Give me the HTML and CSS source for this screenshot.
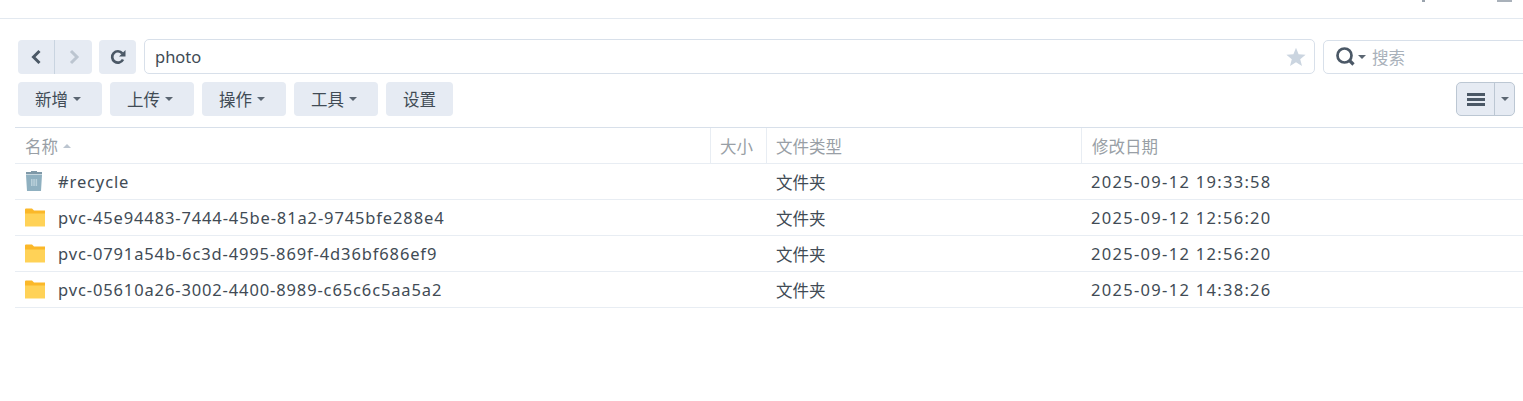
FILE: index.html
```html
<!DOCTYPE html>
<html lang="zh-CN">
<head>
<meta charset="utf-8">
<title>File Station</title>
<link rel="stylesheet" href="styles.css">
</head>
<body>
<header class="titlebar">
  <span class="tb-dot"></span>
  <span class="tb-bar"></span>
</header>
<main class="content">
  <div class="row-path">
    <div class="btn-group">
      <button class="nav nav-back"><svg width="12" height="16" viewBox="0 0 12 16"><path d="M9.500 2 3.500 8l6 6" fill="none" stroke="#4b5866" stroke-width="3"/></svg></button>
      <button class="nav nav-fwd"><svg width="12" height="16" viewBox="0 0 12 16"><path d="M3 2l6 6-6 6" fill="none" stroke="#bcc5d0" stroke-width="3"/></svg></button>
    </div>
    <button class="refresh"><svg width="16" height="16" viewBox="0 0 16 16"><path d="M13 10.500A5.700 5.700 0 1 1 12.300 4.300" fill="none" stroke="#4b5866" stroke-width="2.700"/><path d="M15.500 1v6.600H9z" fill="#4b5866"/></svg></button>
    <div class="path-box">
      <span class="path-text">photo</span>
      <svg class="star" width="20" height="20" viewBox="0 0 20 20"><path d="M10 .8l2.600 6.500 7 .4-5.400 4.500 1.800 6.800L10 15.200 4 19l1.800-6.800L.4 7.700l7-.4z" fill="#cbd5e0"/></svg>
    </div>
    <div class="search-box">
      <svg class="search-icon" width="20" height="20" viewBox="0 0 20 20"><circle cx="8.500" cy="8.500" r="7" fill="none" stroke="#4b5866" stroke-width="2.700"/><path d="M13.500 13.500l4 4" stroke="#4b5866" stroke-width="3.200"/></svg>
      <span class="caret caret-search"></span>
      <span class="search-text">搜索</span>
    </div>
  </div>
  <div class="row-actions">
    <button class="act">新增<span class="caret"></span></button>
    <button class="act">上传<span class="caret"></span></button>
    <button class="act">操作<span class="caret"></span></button>
    <button class="act">工具<span class="caret"></span></button>
    <button class="act act-plain">设置</button>
    <div class="view-toggle">
      <span class="view-list"><svg width="18" height="13" viewBox="0 0 18 13"><path d="M0 1.500h18M0 6.500h18M0 11.500h18" stroke="#4b5866" stroke-width="2.800"/></svg></span>
      <span class="view-more"><span class="caret"></span></span>
    </div>
  </div>
  <div class="table">
    <div class="tr th">
      <div class="c-name">名称<span class="sort"></span></div>
      <div class="c-size">大小</div>
      <div class="c-type">文件类型</div>
      <div class="c-date">修改日期</div>
    </div>
    <div class="tr">
      <div class="c-name"><svg class="ico" width="22" height="22" viewBox="1 1 22 22"><path d="M8 1h6v1h5v2H3V2h5z" fill="#7f99a8"/><path d="M3 4.500h16L18 21H4z" fill="#8fb0c0"/><path d="M8 9h1.500v7H8zM10.300 9h1.500v7h-1.500zM12.600 9h1.500v7h-1.500z" fill="#b9d0da"/></svg><span class="fname">#recycle</span></div>
      <div class="c-size"></div>
      <div class="c-type">文件夹</div>
      <div class="c-date">2025-09-12 19:33:58</div>
    </div>
    <div class="tr">
      <div class="c-name"><svg class="ico" width="22" height="20" viewBox="0 0 22 20"><path d="M1 1.500a1 1 0 0 1 1-1h6l2 2h11v4H1z" fill="#fbb829"/><path d="M1 5.500h20v13H1z" fill="#ffd257"/></svg><span class="fname">pvc-45e94483-7444-45be-81a2-9745bfe288e4</span></div>
      <div class="c-size"></div>
      <div class="c-type">文件夹</div>
      <div class="c-date">2025-09-12 12:56:20</div>
    </div>
    <div class="tr">
      <div class="c-name"><svg class="ico" width="22" height="20" viewBox="0 0 22 20"><path d="M1 1.500a1 1 0 0 1 1-1h6l2 2h11v4H1z" fill="#fbb829"/><path d="M1 5.500h20v13H1z" fill="#ffd257"/></svg><span class="fname">pvc-0791a54b-6c3d-4995-869f-4d36bf686ef9</span></div>
      <div class="c-size"></div>
      <div class="c-type">文件夹</div>
      <div class="c-date">2025-09-12 12:56:20</div>
    </div>
    <div class="tr">
      <div class="c-name"><svg class="ico" width="22" height="20" viewBox="0 0 22 20"><path d="M1 1.500a1 1 0 0 1 1-1h6l2 2h11v4H1z" fill="#fbb829"/><path d="M1 5.500h20v13H1z" fill="#ffd257"/></svg><span class="fname">pvc-05610a26-3002-4400-8989-c65c6c5aa5a2</span></div>
      <div class="c-size"></div>
      <div class="c-type">文件夹</div>
      <div class="c-date">2025-09-12 14:38:26</div>
    </div>
  </div>
</main>
</body>
</html>
```
FILE: styles.css
```css
* { box-sizing: border-box; }
html, body { margin: 0; padding: 0; height: 100%; overflow: hidden; background: #fff; }
body {
  font-family: "Noto Sans", "Noto Sans CJK SC", sans-serif;
  font-size: 16.5px;
  color: #414b55;
  width: 1523px;
}
button { font: inherit; color: inherit; border: 0; padding: 0; margin: 0; }

.titlebar {
  height: 19px;
  border-bottom: 1px solid #e3e9f0;
  display: flex;
  align-items: flex-start;
  padding-left: 1422px;
}
.tb-dot { width: 3px; height: 2px; background: #9aa3ad; }
.tb-bar { width: 15px; height: 2px; margin-left: 72px; background: #a9b1ba; }

.content { padding: 21px 0 0 15px; }

.row-path { display: flex; height: 34px; padding-left: 3px; }
.btn-group { display: flex; flex: none; width: 74px; height: 34px; background: #e6ebf3; border-radius: 4px; }
.nav { background: transparent; width: 37px; height: 34px; display: flex; align-items: center; justify-content: center; }
.nav-back { border-right: 1px solid #c9d4e0; }
.refresh { flex: none; width: 37px; height: 34px; margin-left: 7px; background: #e6ebf3; border-radius: 4px; display: flex; align-items: center; justify-content: center; }
.path-box {
  flex: none; width: 1171px; height: 35px; margin: -1px 0 0 8px;
  border: 1px solid #d8e0ea; border-radius: 5px;
  display: flex; align-items: center; justify-content: space-between;
  padding: 0 8px 0 10px;
}
.path-text { color: #414b55; }
.search-box {
  flex: none; width: 260px; height: 34px; margin-left: 8px;
  border: 1px solid #d8e0ea; border-radius: 5px;
  display: flex; align-items: center; padding-left: 12px;
}
.search-text { color: #a9b1ba; margin-left: 6px; }

.caret {
  display: inline-block; width: 0; height: 0;
  border-left: 4px solid transparent; border-right: 4px solid transparent;
  border-top: 4px solid #5b6672;
  margin-left: 5px;
}
.caret-search { margin-left: 2px; }

.row-actions { display: flex; gap: 8px; height: 34px; margin-top: 8px; padding-left: 3px; }
.act { width: 84px; height: 34px; padding-right: 4px; background: #e6ebf3; border-radius: 4px; display: flex; align-items: center; justify-content: center; }
.act-plain { width: 67px; padding-right: 0; }
.view-toggle {
  display: flex; margin-left: auto; margin-right: 8px;
  width: 59px; height: 34px;
  background: #e6ebf3; border: 1px solid #bcc7d3; border-radius: 5px;
}
.view-list { width: 38px; display: flex; align-items: center; justify-content: center; border-right: 1px solid #bcc7d3; }
.view-more { flex: 1; display: flex; align-items: center; justify-content: center; }
.view-more .caret { margin-left: 0; }

.table { margin-top: 11px; }
.tr { display: flex; height: 36px; border-bottom: 1px solid #e8edf3; align-items: center; }
.th { border-top: 1px solid #d8e0ea; height: 37px; color: #999fa6; }
.c-name { width: 695px; padding-left: 9px; display: flex; align-items: center; }
.c-size { width: 56px; padding-left: 10px; }
.c-type { width: 315px; padding-left: 10px; }
.c-date { flex: 1; padding-left: 10px; letter-spacing: 1.3px; }
.th > div { height: 100%; display: flex; align-items: center; letter-spacing: 0; }
.th .c-size, .th .c-type, .th .c-date { border-left: 1px solid #e8edf3; padding-left: 9px; }
.th .c-date { padding-left: 10px; }
.th .c-name { padding-left: 10px; }
.sort {
  width: 0; height: 0; margin-left: 5px;
  border-left: 4px solid transparent; border-right: 4px solid transparent;
  border-bottom: 4px solid #bcc5d0;
}
.ico { flex: none; margin-right: 12px; }
.fname { letter-spacing: .87px; }
```
